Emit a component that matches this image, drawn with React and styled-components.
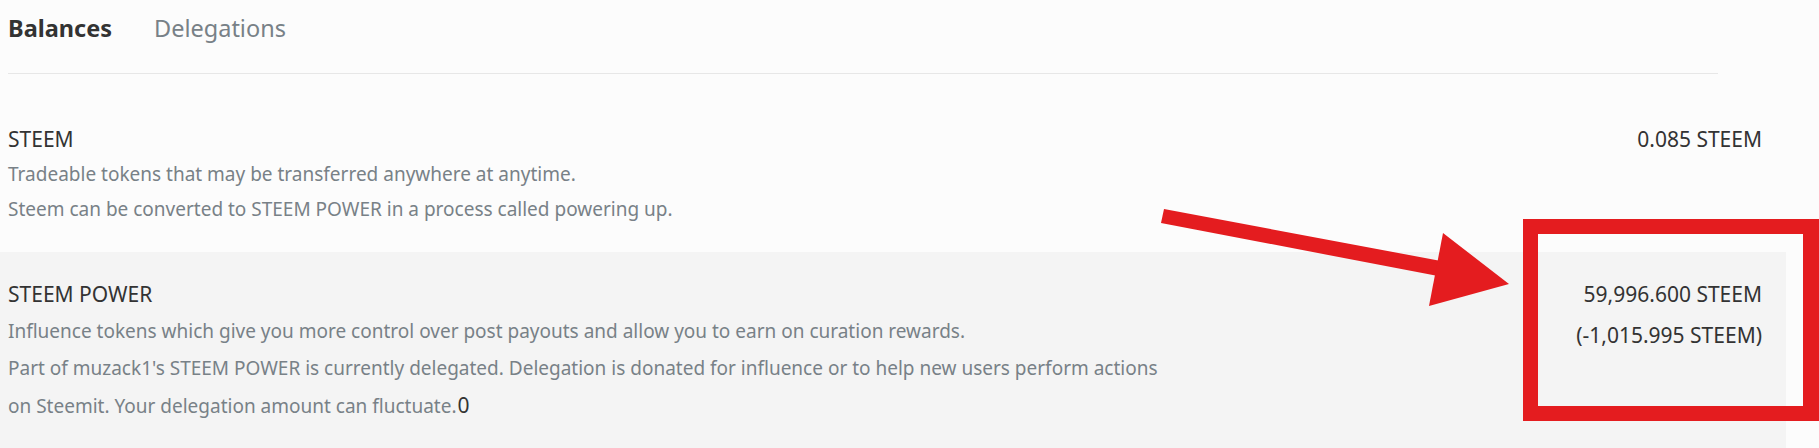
import React from "react";
import styled, { createGlobalStyle } from "styled-components";

const GlobalStyle = createGlobalStyle`
  html, body {
    margin: 0;
    padding: 0;
    background: #fcfcfc;
    font-family: "Noto Sans", "Open Sans", sans-serif;
    color: #333333;
  }
`;

const Page = styled.div`
  position: relative;
  width: 1819px;
  height: 448px;
  overflow: hidden;
  background: #fcfcfc;
`;

const TabBar = styled.nav`
  display: flex;
  align-items: baseline;
  gap: 42px;
  width: 1710px;
  margin-left: 8px;
  padding-top: 12px;
  padding-bottom: 29px;
  border-bottom: 1px solid #e7e7e7;
`;

const Tab = styled.span`
  font-size: ${(p) => (p.$active ? "23.5px" : "23.5px")};
  line-height: 32px;
  font-weight: ${(p) => (p.$active ? 700 : 400)};
  color: ${(p) => (p.$active ? "#333333" : "#788187")};
`;

const Rows = styled.div`
  margin-top: 24px;
  width: 1786px;
`;

const Row = styled.section`
  display: flex;
  justify-content: space-between;
  align-items: flex-start;
  padding: 24px 24px 25px 8px;
  background: ${(p) => (p.$shaded ? "#f4f4f4" : "transparent")};
  line-height: ${(p) => p.$lh}px;
`;

const Info = styled.div`
  display: flex;
  flex-direction: column;
`;

const Title = styled.div`
  font-size: 21px;
  color: #333333;
`;

const Desc = styled.div`
  font-size: 19px;
  color: #788187;
  max-width: 1160px;
`;

const Amount = styled.span`
  font-size: 21px;
  color: #333333;
  padding-left: 1px;
`;

const Values = styled.div`
  display: flex;
  flex-direction: column;
  align-items: flex-end;
  font-size: 21px;
  color: #333333;
`;

const Value = styled.div`
  margin-top: ${(p) => (p.$sub ? "4px" : "0")};
`;

const Highlight = styled.div`
  position: absolute;
  left: 1523px;
  top: 219px;
  width: 296px;
  height: 202px;
  box-sizing: border-box;
  border: 15px solid #e41c1f;
  border-right-width: 16px;
`;

const ArrowSvg = styled.svg`
  position: absolute;
  left: 0;
  top: 0;
  pointer-events: none;
`;

function Arrow() {
  return (
    <ArrowSvg width="1819" height="448" viewBox="0 0 1819 448">
      <polygon points="1164,209 1441,261 1438,276 1161,223" fill="#e41c1f" />
      <polygon points="1443,233 1509,284 1429,306" fill="#e41c1f" />
    </ArrowSvg>
  );
}

export default function App() {
  return (
    <Page>
      <GlobalStyle />
      <TabBar>
        <Tab $active>Balances</Tab>
        <Tab>Delegations</Tab>
      </TabBar>
      <Rows>
        <Row $lh={35}>
          <Info>
            <Title>STEEM</Title>
            <Desc>Tradeable tokens that may be transferred anywhere at anytime.</Desc>
            <Desc>Steem can be converted to STEEM POWER in a process called powering up.</Desc>
          </Info>
          <Values>
            <Value>0.085 STEEM</Value>
          </Values>
        </Row>
        <Row $shaded $lh={37}>
          <Info>
            <Title>STEEM POWER</Title>
            <Desc>Influence tokens which give you more control over post payouts and allow you to earn on curation rewards.</Desc>
            <Desc>
              Part of muzack1's STEEM POWER is currently delegated. Delegation is donated for influence or to help new users perform actions on Steemit. Your delegation amount can fluctuate.<Amount>0</Amount>
            </Desc>
          </Info>
          <Values>
            <Value>59,996.600 STEEM</Value>
            <Value $sub>(-1,015.995 STEEM)</Value>
          </Values>
        </Row>
      </Rows>
      <Arrow />
      <Highlight />
    </Page>
  );
}
